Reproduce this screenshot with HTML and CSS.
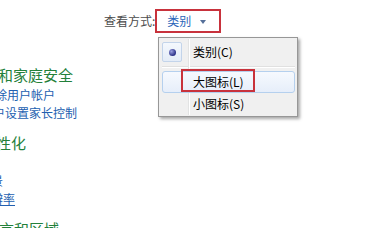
FILE: index.html
```html
<!DOCTYPE html>
<html lang="zh-CN">
<head>
<meta charset="utf-8">
<link rel="stylesheet" href="styles.css">
</head>
<body>
<div class="page">
  <div class="toolbar">
    <span class="view-label">查看方式:</span>
    <span class="view-btn"><span class="view-value">类别</span><span class="arrow"></span></span>
  </div>
  <div class="categories">
    <div class="cat-title t1">和家庭安全</div>
    <div class="cat-link l1">除用户帐户</div>
    <div class="cat-link l2">户设置家长控制</div>
    <div class="cat-title t2">性化</div>
    <div class="cat-link l3">&nbsp;</div>
    <div class="cat-link l4">景</div>
    <div class="cat-link l5"><span class="ul">辨率</span></div>
    <div class="cat-title t3">言和区域</div>
  </div>
  <div class="menu">
    <div class="menu-gutter"></div>
    <div class="menu-item">
      <span class="check"><span class="dot"></span></span>
      <span class="menu-text">类别(C)</span>
    </div>
    <div class="menu-sep"></div>
    <div class="menu-item hover">
      <span class="check-space"></span>
      <span class="menu-text">大图标(L)</span>
      <span class="mark"></span>
    </div>
    <div class="menu-item">
      <span class="check-space"></span>
      <span class="menu-text">小图标(S)</span>
    </div>
  </div>
</div>
</body>
</html>
```
FILE: styles.css
```css
html, body {
  margin: 0;
  padding: 0;
  background: #ffffff;
}
.page {
  position: relative;
  width: 366px;
  height: 228px;
  overflow: hidden;
  font-family: "Noto Sans CJK SC", "Noto Sans", sans-serif;
  font-size: 12px;
}
.toolbar {
  display: flex;
  align-items: center;
  padding: 9px 0 0 104px;
  height: 24px;
}
.view-label {
  color: #4c4c4c;
  line-height: 24px;
  white-space: nowrap;
}
.view-btn {
  display: flex;
  align-items: center;
  box-sizing: border-box;
  width: 66px;
  height: 24px;
  padding-left: 10px;
  border: 2px solid #c8323c;
}
.view-value {
  color: #2a64b8;
  line-height: 20px;
  width: 33px;
}
.arrow {
  width: 0;
  height: 0;
  border-left: 3.5px solid transparent;
  border-right: 3.5px solid transparent;
  border-top: 4px solid #56709a;
  margin-top: 1px;
}
.categories {
  margin-top: 32px;
  white-space: nowrap;
}
.cat-title {
  font-size: 15px;
  line-height: 20px;
  color: #23803a;
}
.cat-link {
  font-size: 12px;
  line-height: 18px;
  color: #2260b0;
}
.t1 { text-indent: -2px; }
.l1 { text-indent: -5px; margin-top: 1px; }
.l2 { text-indent: -7px; }
.t2 { text-indent: -4px; margin-top: 11px; }
.l3 { margin-top: 1px; }
.l4 { text-indent: -9px; }
.l5 { text-indent: -9px; }
.t3 { text-indent: -1px; margin-top: 11px; }
.ul { text-decoration: underline; }

.menu {
  position: absolute;
  left: 158px;
  top: 37px;
  width: 140px;
  box-sizing: border-box;
  padding: 3px 2px 1px 3px;
  background: #f0f0f0;
  border: 1px solid #979797;
  box-shadow: 2px 2px 3px rgba(0, 0, 0, 0.35);
}
.menu-gutter {
  position: absolute;
  left: 29px;
  top: 1px;
  bottom: 1px;
  width: 1px;
  background: #e2e3e3;
  border-right: 1px solid #ffffff;
}
.menu-item {
  position: relative;
  display: flex;
  align-items: center;
  height: 22px;
  box-sizing: border-box;
  color: #000000;
}
.menu-item.hover {
  border: 1px solid #b5d0ee;
  border-radius: 3px;
  background: linear-gradient(#f6f9fe, #e6eefa);
}
.check {
  display: flex;
  align-items: center;
  justify-content: center;
  box-sizing: border-box;
  width: 20px;
  height: 20px;
  border: 1px solid #c3d4ea;
  border-radius: 2px;
  background: linear-gradient(#f4f8fd, #e4ecf7);
}
.dot {
  width: 7px;
  height: 7px;
  border-radius: 50%;
  background: radial-gradient(circle at 35% 35%, #9aa0e0, #2a2f86 70%);
}
.check-space {
  width: 20px;
  flex: none;
}
.menu-text {
  margin-left: 11px;
  line-height: 20px;
}
.hover .check-space { margin-left: -1px; }
.menu-sep {
  height: 1px;
  margin: 3px 0 3px 0;
  background: #e0e0e0;
  border-bottom: 1px solid #ffffff;
}
.mark {
  position: absolute;
  left: 18px;
  top: -3px;
  width: 74px;
  height: 23px;
  box-sizing: border-box;
  border: 2px solid #c8323c;
}
```
